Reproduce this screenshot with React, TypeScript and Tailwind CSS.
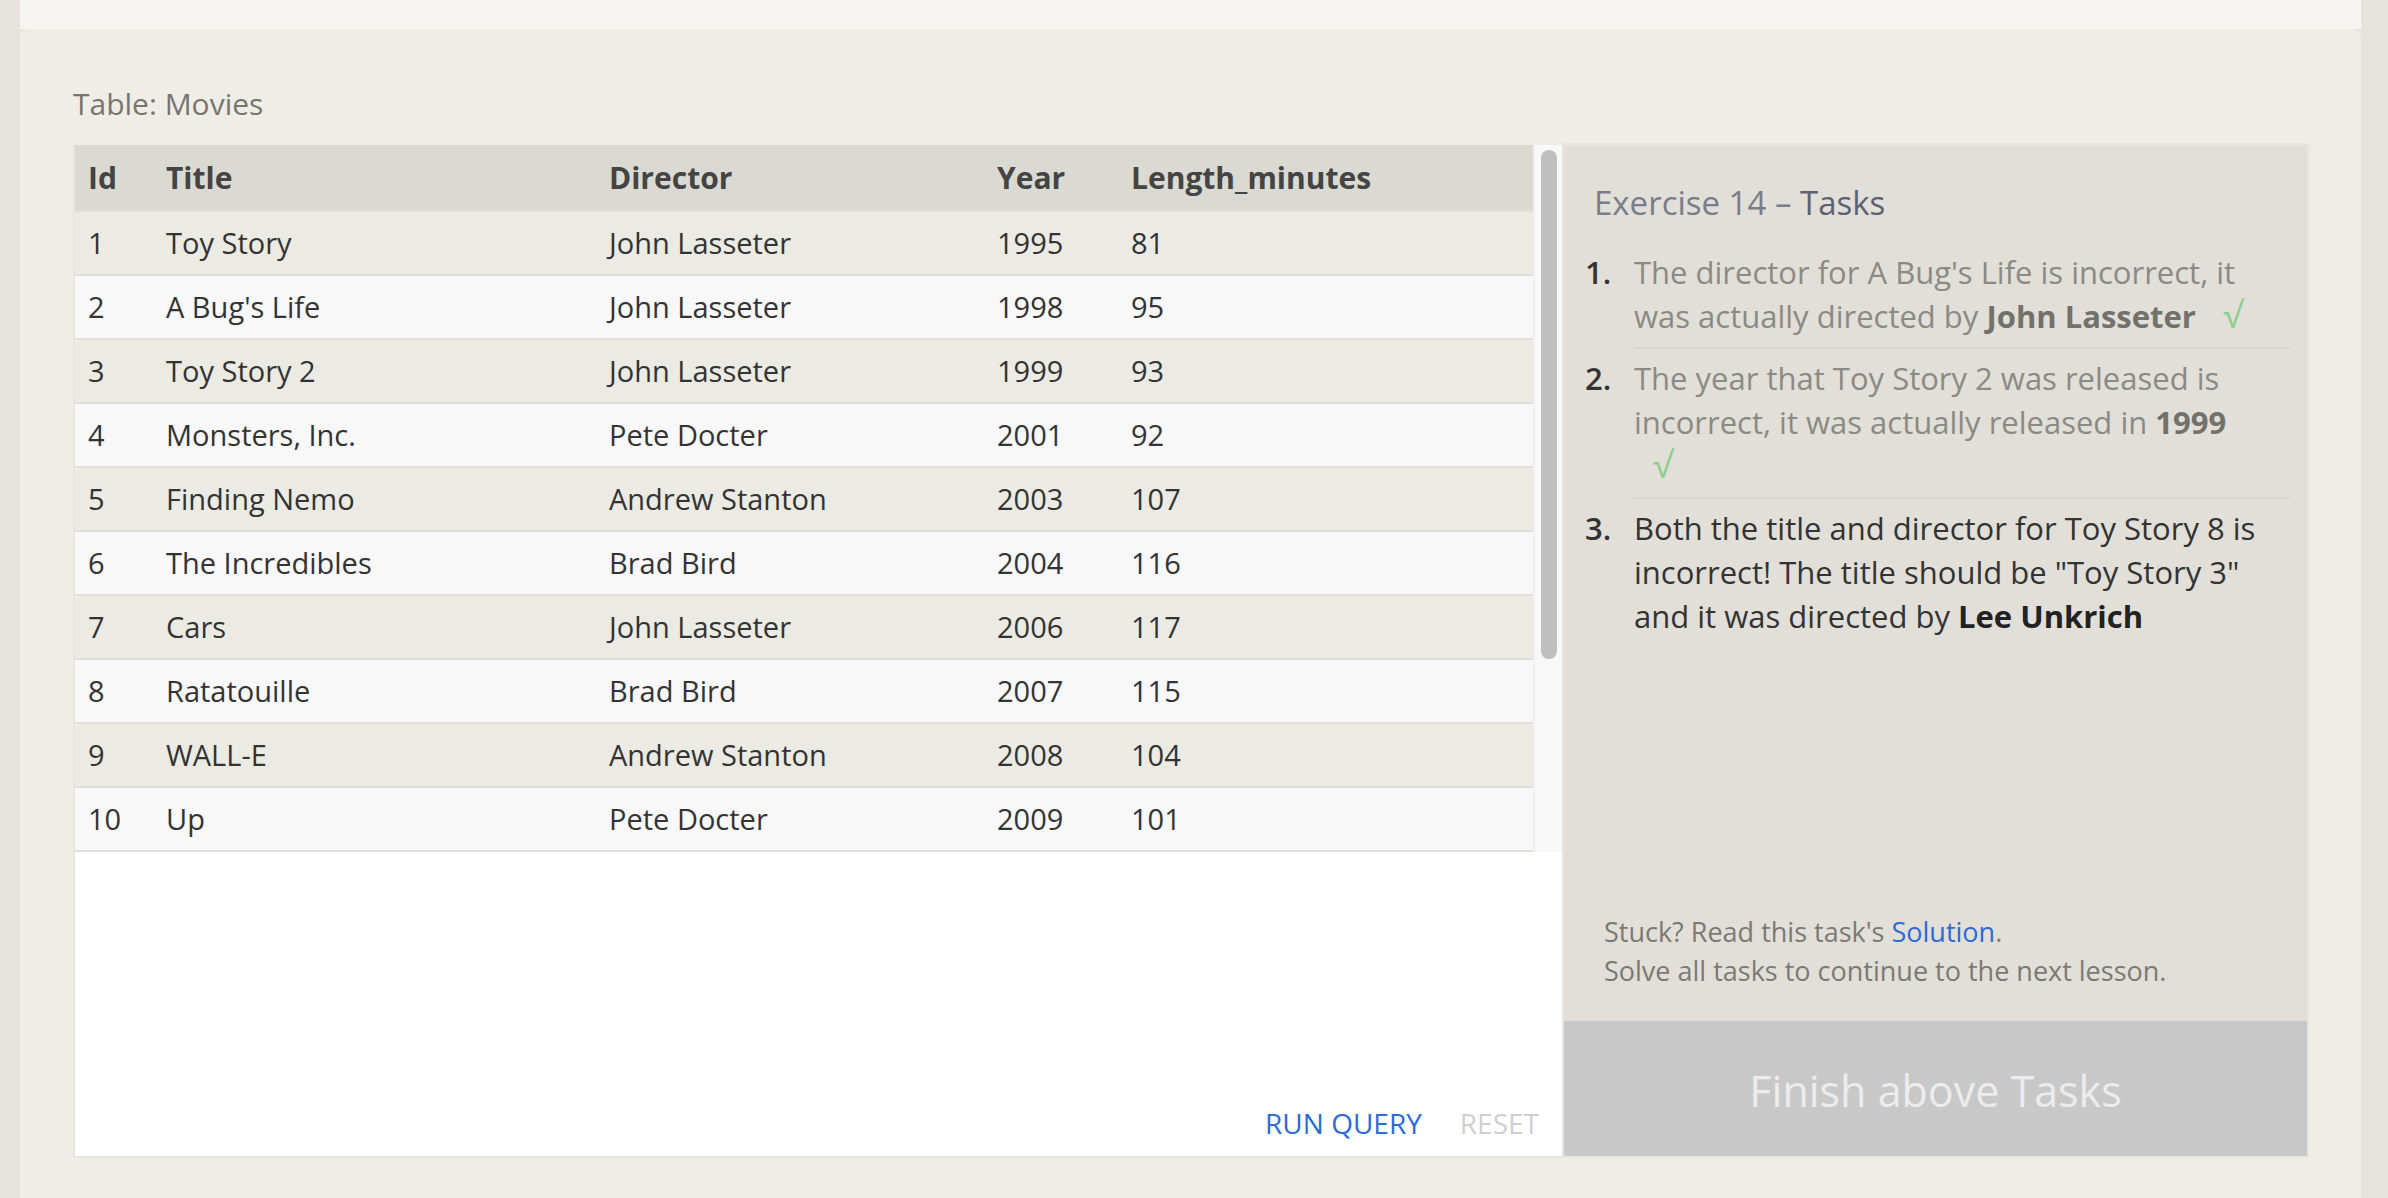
import React from "react";

const rows: [number, string, string, number, number][] = [
  [1, "Toy Story", "John Lasseter", 1995, 81],
  [2, "A Bug's Life", "John Lasseter", 1998, 95],
  [3, "Toy Story 2", "John Lasseter", 1999, 93],
  [4, "Monsters, Inc.", "Pete Docter", 2001, 92],
  [5, "Finding Nemo", "Andrew Stanton", 2003, 107],
  [6, "The Incredibles", "Brad Bird", 2004, 116],
  [7, "Cars", "John Lasseter", 2006, 117],
  [8, "Ratatouille", "Brad Bird", 2007, 115],
  [9, "WALL-E", "Andrew Stanton", 2008, 104],
  [10, "Up", "Pete Docter", 2009, 101],
];

const cols = "grid grid-cols-[78px_443px_388px_134px_1fr] items-center pl-[13px]";

function Check() {
  return <span className="inline-block ml-[19px] text-[36px] leading-[40px] text-[#8fcf8c]">√</span>;
}

export default function App() {
  return (
    <div
      className="min-h-screen bg-[#e6e3df] pl-[20px] pr-[27px]"
      style={{ fontFamily: '"Open Sans", "Liberation Sans", sans-serif' }}
    >
      <div className="h-[29px] bg-[#f6f5f1]" />
      <div className="h-[1169px] rounded-t-[8px] bg-[#f0ede6] pl-[53px] pr-[52px] pt-[55px]">
        <div className="text-[30px] leading-[40px] text-[#777570] mb-[21px]">Table: Movies</div>
        <div className="flex h-[1013px]">
          {/* left: table + query */}
          <div className="w-[1489px] flex flex-col border-l-2 border-b-2 border-[#e7e5df]">
            <div className="flex">
              <div className="flex-1">
                <div className={cols + " h-[65px] bg-[#dadad2] text-[30px] font-bold text-[#444]"}>
                  <div>Id</div>
                  <div>Title</div>
                  <div>Director</div>
                  <div>Year</div>
                  <div>Length_minutes</div>
                </div>
                {rows.map((r, i) => (
                  <div
                    key={r[0]}
                    className={
                      cols +
                      " h-[64px] border-t-2 border-[#dfded9] text-[29px] text-[#333] " +
                      (i % 2 === 0 ? "bg-[#ebeae3]" : "bg-[#f8f8f8]")
                    }
                  >
                    <div>{r[0]}</div>
                    <div>{r[1]}</div>
                    <div>{r[2]}</div>
                    <div>{r[3]}</div>
                    <div>{r[4]}</div>
                  </div>
                ))}
                <div className="h-[2px] bg-[#dfded9]" />
              </div>
              <div className="w-[29px] bg-[#f8f8f8] border-l-2 border-[#efefef] pt-[5px] flex justify-center">
                <div className="w-[16px] h-[509px] rounded-full bg-[#bfbfbf]" />
              </div>
            </div>
            <div className="flex-1 bg-white flex items-end justify-end pr-[23px] pb-[13px] gap-[38px] text-[28px] leading-[40px]">
              <span className="text-[#2d6bd5]">RUN QUERY</span>
              <span className="text-[#cfcfcf]">RESET</span>
            </div>
          </div>
          {/* right: tasks */}
          <div className="w-[747px] -mt-[2px] border-2 border-[#e7e5df] bg-[#e1dfd8] flex flex-col">
            <div className="pl-[30px] pt-[38px] text-[33px] leading-[40px]">
              <span className="text-[#787d8a]">Exercise 14 – </span>
              <span className="text-[#5c6272]">Tasks</span>
            </div>
            <ol className="mt-[27px] mr-[18px] text-[31px] leading-[44px]">
              <li className="flex">
                <span className="w-[70px] pl-[21px] font-semibold text-[#333] shrink-0">1.</span>
                <div className="flex-1 pb-[9px] border-b-2 border-[#d8d6ce] text-[#8b8a85]">
                  The director for A Bug's Life is incorrect, it
                  <br />
                  was actually directed by <b className="font-bold text-[#72716c]">John Lasseter</b>{" "}
                  <Check />
                </div>
              </li>
              <li className="flex">
                <span className="w-[70px] pl-[21px] font-semibold text-[#333] shrink-0 pt-[7px]">2.</span>
                <div className="flex-1 pt-[7px] pb-[9px] border-b-2 border-[#d8d6ce] text-[#8b8a85]">
                  The year that Toy Story 2 was released is
                  <br />
                  incorrect, it was actually released in <b className="font-bold text-[#72716c]">1999</b>
                  <br />
                  <Check />
                </div>
              </li>
              <li className="flex">
                <span className="w-[70px] pl-[21px] font-semibold text-[#333] shrink-0 pt-[7px]">3.</span>
                <div className="flex-1 pt-[7px] pb-[9px] text-[#333]">
                  Both the title and director for Toy Story 8 is
                  <br />
                  incorrect! The title should be "Toy Story 3"
                  <br />
                  and it was directed by <b className="font-bold text-[#222]">Lee Unkrich</b>
                </div>
              </li>
            </ol>
            <div className="mt-auto pl-[40px] pb-[31px] text-[27px] leading-[39px] text-[#7b7976]">
              <div>
                Stuck? Read this task's <span className="text-[#2d6bd5]">Solution</span>.
              </div>
              <div>Solve all tasks to continue to the next lesson.</div>
            </div>
            <div className="h-[135px] pt-[6px] bg-[#c8c8c8] flex items-center justify-center text-[43px] text-[#ececec]">
              Finish above Tasks
            </div>
          </div>
        </div>
      </div>
    </div>
  );
}
